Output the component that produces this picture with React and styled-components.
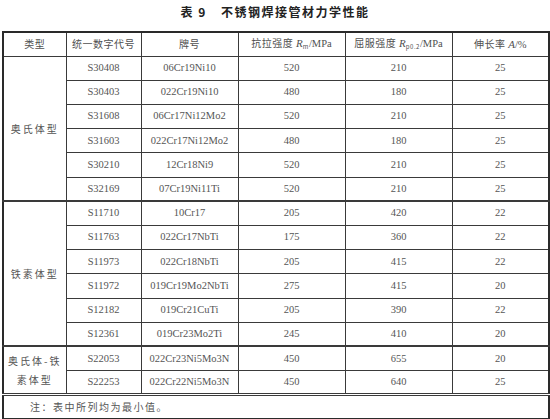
import React from 'react';
import styled, { createGlobalStyle } from 'styled-components';

const GlobalStyle = createGlobalStyle`
  html, body {
    margin: 0;
    padding: 0;
    background: #ffffff;
  }
  body {
    font-family: "Liberation Serif", "Noto Sans CJK SC", serif;
    color: #4a4a4a;
  }
`;

const Page = styled.div`
  width: 550px;
  height: 419px;
  overflow: hidden;
  padding: 0 2px 0 2px;
  box-sizing: border-box;
`;

const Title = styled.div`
  height: 31px;
  display: flex;
  align-items: flex-start;
  justify-content: center;
  padding-top: 3px;
  box-sizing: border-box;
  font-family: "Noto Sans CJK SC", sans-serif;
  font-weight: 700;
  font-size: 12px;
  color: #222;
  letter-spacing: 1.5px;

  span {
    margin-right: 14px;
  }
`;

const Table = styled.table`
  width: 546px;
  border-collapse: collapse;
  table-layout: fixed;
  border: 2px solid #2a2a2a;
`;

const Row = styled.tr`
  height: 24.2px;
`;

const Cell = styled.td`
  border: 1px solid #3a3a3a;
  border-top-width: ${({ $thickTop }) => ($thickTop ? '2px' : '1px')};
  padding: 0;
  text-align: center;
  vertical-align: middle;
  font-size: 10.5px;
  line-height: 1;
  color: #555;
  white-space: nowrap;
`;

const HeadCell = styled(Cell).attrs({ as: 'th' })`
  font-weight: 400;
  font-family: "Noto Sans CJK SC", sans-serif;
  font-size: 10px;
  color: #505050;
  letter-spacing: 0.5px;

  i {
    font-family: "Liberation Serif", serif;
    font-size: 11px;
    letter-spacing: 0;
  }
  sub {
    font-size: 6px;
    vertical-align: -2px;
  }
  em {
    font-style: normal;
    font-family: "Liberation Serif", serif;
    font-size: 10.5px;
    letter-spacing: 0;
  }
`;

const GroupCell = styled(Cell)`
  font-family: "Noto Sans CJK SC", sans-serif;
  font-size: 10px;
  letter-spacing: 2px;
  line-height: 19px;
  padding: 0 4px;
`;

const NoteCell = styled(Cell)`
  border-top: 3px double #3a3a3a;
  text-align: left;
  padding-left: 26px;
  font-family: "Noto Sans CJK SC", sans-serif;
  font-size: 10px;
  letter-spacing: 1.5px;
`;

const groups = [
  {
    name: ['奥氏体型'],
    rows: [
      ['S30408', '06Cr19Ni10', '520', '210', '25'],
      ['S30403', '022Cr19Ni10', '480', '180', '25'],
      ['S31608', '06Cr17Ni12Mo2', '520', '210', '25'],
      ['S31603', '022Cr17Ni12Mo2', '480', '180', '25'],
      ['S30210', '12Cr18Ni9', '520', '210', '25'],
      ['S32169', '07Cr19Ni11Ti', '520', '210', '25'],
    ],
  },
  {
    name: ['铁素体型'],
    rows: [
      ['S11710', '10Cr17', '205', '420', '22'],
      ['S11763', '022Cr17NbTi', '175', '360', '22'],
      ['S11973', '022Cr18NbTi', '205', '415', '22'],
      ['S11972', '019Cr19Mo2NbTi', '275', '415', '20'],
      ['S12182', '019Cr21CuTi', '205', '390', '22'],
      ['S12361', '019Cr23Mo2Ti', '245', '410', '20'],
    ],
  },
  {
    name: ['奥氏体-铁', '素体型'],
    rows: [
      ['S22053', '022Cr23Ni5Mo3N', '450', '655', '20'],
      ['S22253', '022Cr22Ni5Mo3N', '450', '640', '25'],
    ],
  },
];

export default function App() {
  return (
    <Page>
      <GlobalStyle />
      <Title>
        <span>表 9</span>不锈钢焊接管材力学性能
      </Title>
      <Table>
        <colgroup>
          <col style={{ width: 63 }} />
          <col style={{ width: 75 }} />
          <col style={{ width: 97 }} />
          <col style={{ width: 107 }} />
          <col style={{ width: 107 }} />
          <col style={{ width: 97 }} />
        </colgroup>
        <thead>
          <Row>
            <HeadCell>类型</HeadCell>
            <HeadCell>统一数字代号</HeadCell>
            <HeadCell>牌号</HeadCell>
            <HeadCell>
              抗拉强度 <i>R</i>
              <sub>m</sub>
              <em>/MPa</em>
            </HeadCell>
            <HeadCell>
              屈服强度 <i>R</i>
              <sub>p0.2</sub>
              <em>/MPa</em>
            </HeadCell>
            <HeadCell>
              伸长率 <i>A</i>
              <em>/%</em>
            </HeadCell>
          </Row>
        </thead>
        <tbody>
          {groups.map((g, gi) =>
            g.rows.map((r, ri) => (
              <Row key={r[0]}>
                {ri === 0 && (
                  <GroupCell rowSpan={g.rows.length} $thickTop={gi > 0}>
                    {g.name.map((line, li) => (
                      <React.Fragment key={li}>
                        {li > 0 && <br />}
                        {line}
                      </React.Fragment>
                    ))}
                  </GroupCell>
                )}
                {r.map((v, ci) => (
                  <Cell key={ci} $thickTop={gi > 0 && ri === 0}>
                    {v}
                  </Cell>
                ))}
              </Row>
            ))
          )}
          <Row>
            <NoteCell colSpan={6}>注：表中所列均为最小值。</NoteCell>
          </Row>
        </tbody>
      </Table>
    </Page>
  );
}
